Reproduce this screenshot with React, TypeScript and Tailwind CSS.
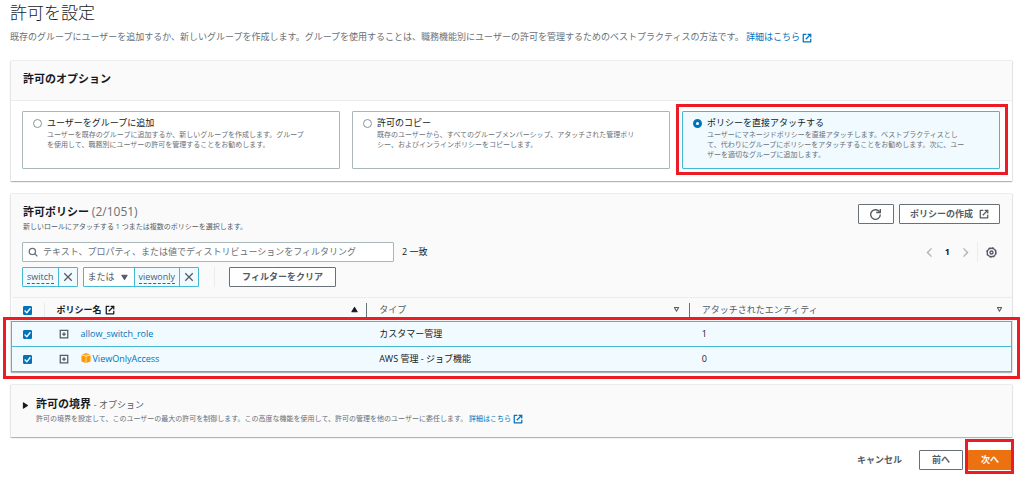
import { useState, type ReactNode } from "react";

type IconProps = { className?: string };

function ExternalIcon({ className = "size-[10px]" }: IconProps) {
  return (
    <svg viewBox="0 0 16 16" fill="none" stroke="currentColor" strokeWidth="2" className={className} aria-hidden="true">
      <path strokeLinecap="square" d="M10 2h4v4" />
      <path d="m6 10 8-8" />
      <path strokeLinejoin="round" d="M14 9.05V14H2V2h5" />
    </svg>
  );
}

function RefreshIcon() {
  return (
    <svg viewBox="0 0 16 16" fill="none" stroke="currentColor" strokeWidth="2" className="size-[11px]" aria-hidden="true">
      <path strokeLinecap="square" d="M10 5h5V0" />
      <path d="M15 8a7 7 0 1 1-.7-3" />
    </svg>
  );
}

function SearchIcon({ className }: IconProps) {
  return (
    <svg viewBox="0 0 16 16" fill="none" stroke="currentColor" strokeWidth="2" className={className} aria-hidden="true">
      <circle cx="7" cy="7" r="5" />
      <path d="m15 15-4.5-4.5" />
    </svg>
  );
}

function CloseIcon() {
  return (
    <svg viewBox="0 0 16 16" fill="none" stroke="currentColor" strokeWidth="2" className="size-[10px]" aria-hidden="true">
      <path d="m2 2 12 12M14 2 2 14" />
    </svg>
  );
}

function AngleIcon({ d }: { d: string }) {
  return (
    <svg viewBox="0 0 16 16" fill="none" stroke="currentColor" strokeWidth="2" className="size-[11px]" aria-hidden="true">
      <path d={d} />
    </svg>
  );
}

function GearIcon() {
  return (
    <svg viewBox="0 0 16 16" fill="none" stroke="currentColor" className="size-[11px]" aria-hidden="true">
      <circle cx="8" cy="8" r="6.2" strokeWidth="2" />
      <circle cx="8" cy="8" r="7.4" strokeWidth="1" strokeDasharray="2.9 2.91" />
      <circle cx="8" cy="8" r="2.2" strokeWidth="2" />
    </svg>
  );
}

function ExpandIcon() {
  return (
    <svg viewBox="0 0 16 16" fill="none" stroke="currentColor" strokeWidth="2" className="size-[10px]" aria-hidden="true">
      <path d="M2 2h12v12H2zM8 5v6M5 8h6" />
    </svg>
  );
}

function BoxIcon() {
  return (
    <svg viewBox="0 0 20 20" className="mb-[3px] size-[10px]" aria-hidden="true">
      <path fill="#ff9900" d="M1 4.6 9.4 6.8V20L1 16.8z" />
      <path fill="#ff9900" d="M19 4.6 10.6 6.8V20l8.4-3.2z" />
      <path fill="#ffa51f" d="m10 0 8.4 2.9L10 5.3 1.6 2.9z" />
    </svg>
  );
}

function Caret({ d, filled }: { d: string; filled?: boolean }) {
  return (
    <svg
      viewBox="0 0 8 8"
      fill={filled ? "currentColor" : "none"}
      stroke="currentColor"
      strokeWidth="1.2"
      strokeLinejoin="round"
      className="size-[7px] shrink-0"
      aria-hidden="true"
    >
      <path d={d} />
    </svg>
  );
}

const UP = "M1 6.6 4 1.6l3 5z";
const DOWN = "M1 1.4h6L4 6.4z";
const SMALL_DOWN = "M1.6 1.8h4.8L4 6z";
const RIGHT = "M1.6 1v6l4.6-3z";

function Checkbox({ label, checked, onChange }: { label: string; checked: boolean; onChange: () => void }) {
  return (
    <span className="inline-grid align-middle">
      <input
        type="checkbox"
        aria-label={label}
        checked={checked}
        onChange={onChange}
        className="col-start-1 row-start-1 size-[9px] appearance-none rounded-[1px] border border-[#687078] bg-white checked:border-[#0073bb] checked:bg-[#0073bb]"
      />
      {checked && (
        <svg
          viewBox="0 0 14 14"
          fill="none"
          stroke="#fff"
          strokeWidth="2"
          className="pointer-events-none col-start-1 row-start-1 size-[9px]"
          aria-hidden="true"
        >
          <path d="m2.5 7 3.5 3.5 5.5-7" />
        </svg>
      )}
    </span>
  );
}

function Panel({ children }: { children: ReactNode }) {
  return (
    <section className="border-t border-[#eaeded] bg-white shadow-[0_1px_1px_0_rgba(0,28,36,0.2),1px_1px_1px_0_rgba(0,28,36,0.08),-1px_1px_1px_0_rgba(0,28,36,0.08)]">
      {children}
    </section>
  );
}

function Highlight({ className }: { className: string }) {
  return <span aria-hidden="true" className={"pointer-events-none absolute z-10 border-[3px] border-[#ed1c24] " + className} />;
}

const options = [
  {
    id: "group",
    title: "ユーザーをグループに追加",
    text: "ユーザーを既存のグループに追加するか、新しいグループを作成します。グループを使用して、職務別にユーザーの許可を管理することをお勧めします。",
  },
  {
    id: "copy",
    title: "許可のコピー",
    text: "既存のユーザーから、すべてのグループメンバーシップ、アタッチされた管理ポリシー、およびインラインポリシーをコピーします。",
  },
  {
    id: "attach",
    title: "ポリシーを直接アタッチする",
    text: "ユーザーにマネージドポリシーを直接アタッチします。ベストプラクティスとして、代わりにグループにポリシーをアタッチすることをお勧めします。次に、ユーザーを適切なグループに追加します。",
  },
];

const policies = [
  { name: "allow_switch_role", type: "カスタマー管理", entities: 1, managed: false },
  { name: "ViewOnlyAccess", type: "AWS 管理 - ジョブ機能", entities: 0, managed: true },
];

const button = "flex h-5 items-center justify-center rounded-[1px] border border-[#687078] bg-white font-bold text-[#545b64]";

export default function App() {
  const [option, setOption] = useState("attach");
  const [selected, setSelected] = useState<string[]>(policies.map((p) => p.name));
  const [query, setQuery] = useState("");
  const toggle = (name: string) =>
    setSelected((s) => (s.includes(name) ? s.filter((n) => n !== name) : [...s, name]));
  const all = selected.length === policies.length;

  return (
    <main className="bg-white pt-px pr-3 pb-2 pl-[11px] font-['Open_Sans','Noto_Sans_CJK_JP',sans-serif] text-[9px] leading-[14px] text-[#16191f]">
      <header className="-ml-px">
        <h1 className="text-[17px] leading-6 font-light">許可を設定</h1>
        <p className="mt-[5px] mb-4 text-[#687078]">
          既存のグループにユーザーを追加するか、新しいグループを作成します。グループを使用することは、職務機能別にユーザーの許可を管理するためのベストプラクティスの方法です。{" "}
          <a href="#learn" className="text-[#0073bb]">
            詳細はこちら <ExternalIcon className="inline size-[10px]" />
          </a>
        </p>
      </header>

      <div className="flex flex-col gap-3">
        <Panel>
          <h2 className="flex h-10 items-center border-b border-[#eaeded] bg-[#fafafa] px-3 pb-1 text-[11px] font-bold">
            許可のオプション
          </h2>
          <div className="grid grid-cols-3 gap-3 pt-[10px] pr-3 pb-3 pl-[11px]">
            {options.map((o) => {
              const active = o.id === option;
              return (
                <div key={o.id} className="relative">
                  <label
                    className={
                      "flex h-full min-h-[57px] gap-[5px] rounded-[1px] border pt-1 pr-[30px] pb-2 pl-[10px] " +
                      (active ? "border-[#44b9d6] bg-[#f1faff]" : "border-[#aab7b8] bg-white")
                    }
                  >
                    <input
                      type="radio"
                      name="permission-option"
                      value={o.id}
                      checked={active}
                      onChange={() => setOption(o.id)}
                      className="mt-[3px] size-[9px] shrink-0 appearance-none rounded-full border border-[#879596] bg-white checked:border-[3px] checked:border-[#0073bb]"
                    />
                    <span>
                      <span className="block">{o.title}</span>
                      <span className="block text-[7px] leading-[10px] text-[#687078]">{o.text}</span>
                    </span>
                  </label>
                  {o.id === "attach" && <Highlight className="-top-[7px] -right-2 -bottom-[6px] -left-[6px]" />}
                </div>
              );
            })}
          </div>
        </Panel>

        <Panel>
          <div className="bg-[#fafafa] pt-[10px] pr-3 pb-[10px] pl-[11px]">
            <div className="flex items-start justify-between">
              <div className="pt-px pl-px">
                <h2 className="text-[11px] font-bold">
                  許可ポリシー <span className="text-[12px] font-normal text-[#687078]">(2/1051)</span>
                </h2>
                <p className="mt-[3px] text-[7px] leading-[10px] text-[#545b64]">
                  新しいロールにアタッチする 1 つまたは複数のポリシーを選択します。
                </p>
              </div>
              <div className="flex gap-[5px]">
                <button type="button" aria-label="更新" className={button + " w-9"}>
                  <RefreshIcon />
                </button>
                <button type="button" className={button + " gap-[6px] px-[10px]"}>
                  ポリシーの作成 <ExternalIcon />
                </button>
              </div>
            </div>

            <div className="mt-[10px] flex items-center justify-between">
              <div className="flex grow items-center gap-2">
                <label className="flex h-5 w-full max-w-[372px] items-center gap-[5px] rounded-[1px] border border-[#aab7b8] bg-white px-[5px] text-[#687078]">
                  <SearchIcon className="size-[10px] shrink-0" />
                  <input
                    type="search"
                    aria-label="ポリシーをフィルタリング"
                    value={query}
                    onChange={(e) => setQuery(e.target.value)}
                    placeholder="テキスト、プロパティ、または値でディストリビューションをフィルタリング"
                    className="w-full min-w-0 bg-transparent outline-none placeholder:text-[#687078]"
                  />
                </label>
                <span>2 一致</span>
              </div>
              <nav aria-label="ページ" className="flex items-center gap-[10px] pr-[3px]">
                <button type="button" aria-label="前のページ" className="text-[#aab7b8]">
                  <AngleIcon d="M11 2 5 8l6 6" />
                </button>
                <button type="button" aria-current="page" className="font-bold">
                  1
                </button>
                <button type="button" aria-label="次のページ" className="text-[#aab7b8]">
                  <AngleIcon d="m5 2 6 6-6 6" />
                </button>
                <button type="button" aria-label="設定" className="-ml-1 flex h-5 items-center border-l border-[#eaeded] pl-2 text-[#545b64]">
                  <GearIcon />
                </button>
              </nav>
            </div>

            <div className="mt-[5px] flex h-5 items-stretch text-[#545b64]">
              <div className="flex rounded-[1px] border border-[#44b9d6] bg-[#f1faff]">
                <button type="button" className="px-1">
                  <span className="border-b border-dashed border-[#545b64]">switch</span>
                </button>
                <button type="button" aria-label="switch を削除" className="border-l border-[#44b9d6] px-1">
                  <CloseIcon />
                </button>
              </div>
              <div className="ml-[5px] flex rounded-[1px] border border-[#44b9d6] bg-[#f1faff]">
                <span className="grid items-center bg-white">
                  <select aria-label="演算子" className="col-start-1 row-start-1 h-full appearance-none bg-white pr-[18px] pl-1">
                    <option>または</option>
                    <option>および</option>
                  </select>
                  <span className="pointer-events-none col-start-1 row-start-1 mr-[6px] justify-self-end">
                    <Caret d={DOWN} filled />
                  </span>
                </span>
                <button type="button" className="border-l border-[#44b9d6] px-1">
                  <span className="border-b border-dashed border-[#545b64]">viewonly</span>
                </button>
                <button type="button" aria-label="viewonly を削除" className="border-l border-[#44b9d6] px-1">
                  <CloseIcon />
                </button>
              </div>
              <div className="ml-[15px] border-l border-[#eaeded] pl-[14px]">
                <button type="button" className={button + " px-3"}>
                  フィルターをクリア
                </button>
              </div>
            </div>
          </div>

          <div className="relative">
            <table className="w-full table-fixed border-collapse text-left">
              <thead className="bg-[#fafafa]">
                <tr className="h-6 border-t border-[#eaeded]">
                  <th className="w-8 p-0 pl-[11px] leading-none">
                    <Checkbox
                      label="すべて選択"
                      checked={all}
                      onChange={() => setSelected(all ? [] : policies.map((p) => p.name))}
                    />
                  </th>
                  <th className="p-0 font-bold">
                    <span className="flex items-center gap-[3px] border-l border-[#eaeded] pr-[8px] pl-3">
                      ポリシー名 <ExternalIcon />
                      <span className="ml-auto">
                        <Caret d={UP} filled />
                      </span>
                    </span>
                  </th>
                  <th className="p-0 font-normal text-[#545b64]">
                    <span className="flex items-center justify-between border-l border-[#687078] pr-[9px] pl-3">
                      タイプ <Caret d={SMALL_DOWN} />
                    </span>
                  </th>
                  <th className="p-0 font-normal text-[#545b64]">
                    <span className="flex items-center justify-between border-l border-[#687078] pr-[9px] pl-3">
                      アタッチされたエンティティ <Caret d={SMALL_DOWN} />
                    </span>
                  </th>
                </tr>
              </thead>
              <tbody>
                {policies.map((p) => {
                  const on = selected.includes(p.name);
                  return (
                    <tr key={p.name} className={"h-[25px] border " + (on ? "border-[#44b9d6] bg-[#f1faff]" : "border-[#eaeded]")}>
                      <td className="p-0 pl-[11px] leading-none">
                        <Checkbox label={p.name} checked={on} onChange={() => toggle(p.name)} />
                      </td>
                      <td className="p-0 pl-[15px]">
                        <span className="flex items-center">
                          <button type="button" aria-label={p.name + " を展開"} className="mr-3 text-[#545b64]">
                            <ExpandIcon />
                          </button>
                          <a href="#policy" className="flex items-center gap-[2px] text-[#0073bb]">
                            {p.managed && <BoxIcon />}
                            {p.name}
                          </a>
                        </span>
                      </td>
                      <td className="p-0 pl-[13px]">{p.type}</td>
                      <td className="p-0 pl-[13px]">{p.entities}</td>
                    </tr>
                  );
                })}
              </tbody>
            </table>
            <Highlight className="top-5 -right-2 -bottom-[7px] -left-2" />
          </div>
        </Panel>

        <Panel>
          <div className="flex bg-[#fafafa] py-3 pr-3 pl-[11px]">
            <button type="button" aria-label="許可の境界を展開" className="mt-[5px] mr-[7px] h-[7px]">
              <Caret d={RIGHT} filled />
            </button>
            <div>
              <h2 className="text-[11px] leading-[13px] font-bold">
                許可の境界 <span className="text-[9px] font-normal text-[#545b64]">- オプション</span>
              </h2>
              <p className="mt-[2px] text-[7px] leading-3 text-[#687078]">
                許可の境界を設定して、このユーザーの最大の許可を制御します。この高度な機能を使用して、許可の管理を他のユーザーに委任します。{" "}
                <a href="#boundary" className="text-[#0073bb]">
                  詳細はこちら <ExternalIcon className="inline size-[10px]" />
                </a>
              </p>
            </div>
          </div>
        </Panel>
      </div>

      <div className="mt-[13px] flex items-center justify-end gap-[5px]">
        <button type="button" className="mr-3 h-5 font-bold text-[#545b64]">
          キャンセル
        </button>
        <button type="button" className={button + " w-11"}>
          前へ
        </button>
        <span className="relative">
          <button type="button" className="flex h-5 w-11 items-center justify-center rounded-[1px] bg-[#ec7211] font-bold text-white">
            次へ
          </button>
          <Highlight className="-top-[11px] -right-[2px] -bottom-1 -left-[3px]" />
        </span>
      </div>
    </main>
  );
}
